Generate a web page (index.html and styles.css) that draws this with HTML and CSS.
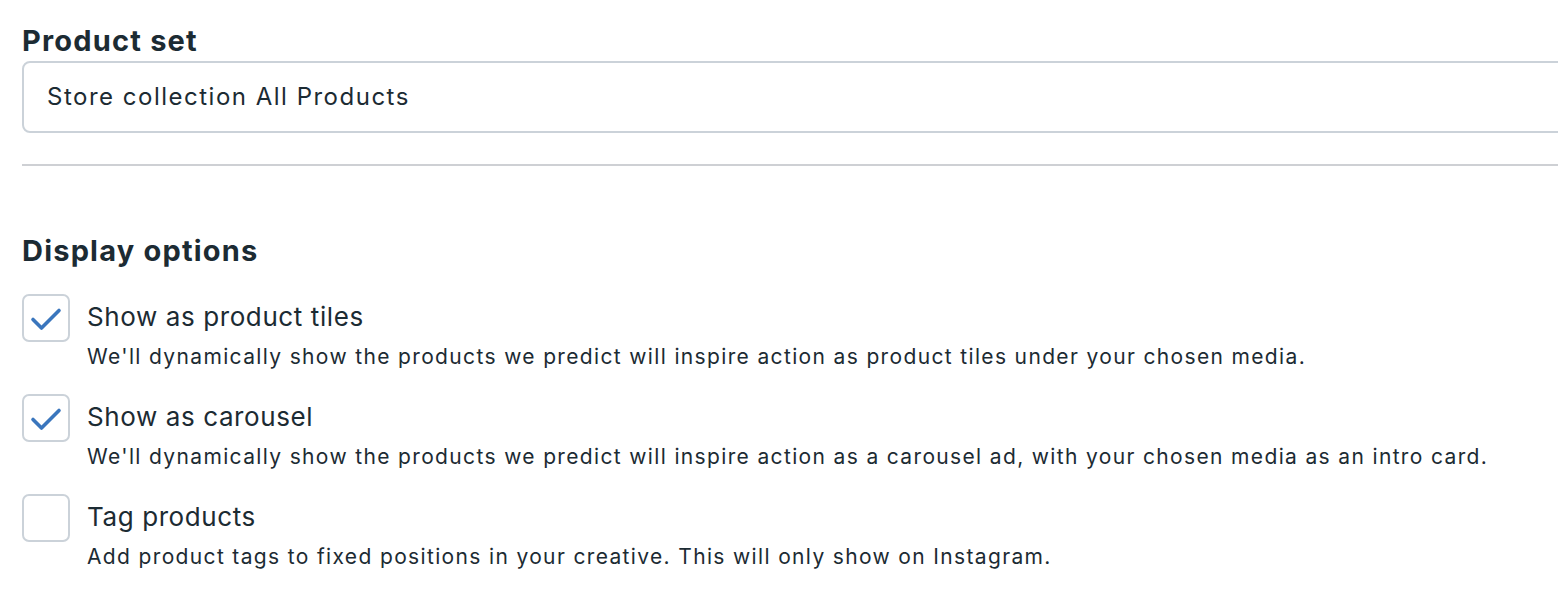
FILE: index.html
```html
<!DOCTYPE html>
<html lang="en">
<head>
    <meta charset="UTF-8">
    <meta name="viewport" content="width=device-width, initial-scale=1.0">
    <title>Product set</title>
    <link rel="stylesheet" href="styles.css">
</head>
<body>
    <section class="block">
        <h2 class="heading">Product set</h2>
        <div class="select">Store collection All Products</div>
    </section>

    <hr class="divider">

    <section class="block">
        <h2 class="heading heading-display">Display options</h2>

        <div class="options">
            <label class="option">
                <span class="box checked">
                    <svg viewBox="0 0 48 48" width="48" height="48"><path d="M11 25.5 L19.5 34 L37 16.5" fill="none" stroke="#3a76bd" stroke-width="3.6" stroke-linecap="round" stroke-linejoin="round"/></svg>
                </span>
                <span class="option-text">
                    <span class="option-title">Show as product tiles</span>
                    <span class="option-desc">We'll dynamically show the products we predict will inspire action as product tiles under your chosen media.</span>
                </span>
            </label>

            <label class="option">
                <span class="box checked">
                    <svg viewBox="0 0 48 48" width="48" height="48"><path d="M11 25.5 L19.5 34 L37 16.5" fill="none" stroke="#3a76bd" stroke-width="3.6" stroke-linecap="round" stroke-linejoin="round"/></svg>
                </span>
                <span class="option-text">
                    <span class="option-title">Show as carousel</span>
                    <span class="option-desc">We'll dynamically show the products we predict will inspire action as a carousel ad, with your chosen media as an intro card.</span>
                </span>
            </label>

            <label class="option">
                <span class="box"></span>
                <span class="option-text">
                    <span class="option-title">Tag products</span>
                    <span class="option-desc">Add product tags to fixed positions in your creative. This will only show on Instagram.</span>
                </span>
            </label>
        </div>
    </section>
</body>
</html>
```

FILE: styles.css
```css
body {
    margin: 0;
    padding: 0 0 0 22px;
    font-family: Inter, "Noto Sans", sans-serif;
    color: #1c2b33;
    background: #fff;
    overflow: hidden;
}

.block {
    margin: 0;
}

.heading {
    font-size: 29px;
    font-weight: 700;
    line-height: 34px;
    letter-spacing: 1.2px;
    margin: 0;
    padding-top: 24px;
}

.heading-display {
    padding-top: 68px;
}

.select {
    box-sizing: border-box;
    height: 72px;
    margin-top: 3px;
    margin-right: -20px;
    border: 2px solid #cbd2d9;
    border-radius: 8px;
    padding: 0 23px;
    font-size: 24px;
    line-height: 68px;
    letter-spacing: 1.5px;
}

.divider {
    border: none;
    height: 2px;
    background: #ced0d4;
    margin: 31px 0 0 0;
}

.options {
    display: flex;
    flex-direction: column;
    gap: 20px;
    margin-top: 26px;
}

.option {
    display: flex;
    gap: 17px;
    align-items: flex-start;
}

.box {
    box-sizing: border-box;
    flex: none;
    width: 48px;
    height: 48px;
    border: 2px solid #cbd2d9;
    border-radius: 7px;
    display: flex;
    align-items: center;
    justify-content: center;
}

.box svg {
    display: block;
    margin: -2px;
}

.option-text {
    display: flex;
    flex-direction: column;
}

.option-title {
    font-size: 26px;
    line-height: 46px;
    letter-spacing: 0.6px;
}

.option-desc {
    font-size: 21px;
    line-height: 34px;
    letter-spacing: 1.35px;
}
```
